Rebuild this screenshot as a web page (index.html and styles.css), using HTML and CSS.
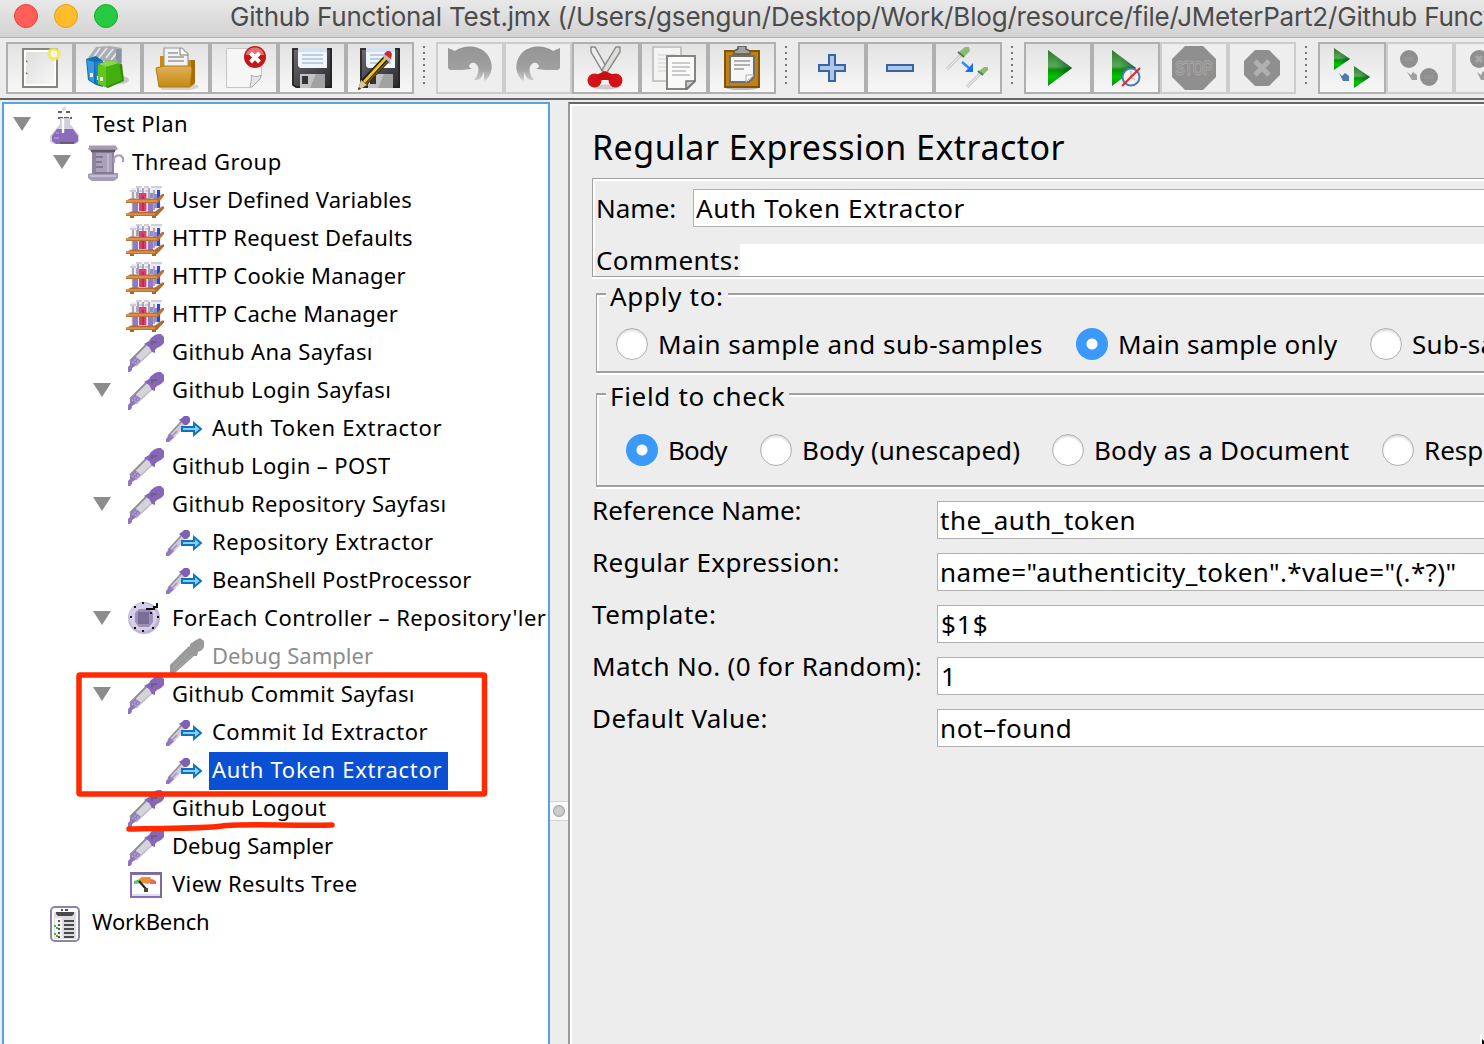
FILE: index.html
```html
<!DOCTYPE html>
<html lang="en">
<head>
<meta charset="utf-8">
<title>Github Functional Test.jmx</title>
<link rel="stylesheet" href="styles.css">
</head>
<body>
<svg class="defs" width="0" height="0" aria-hidden="true">
  <defs>
    <linearGradient id="gPlay" x1="0" y1="0" x2="0" y2="1"><stop offset="0" stop-color="#2a7a2a"/><stop offset=".45" stop-color="#5aa85a"/><stop offset=".55" stop-color="#0a900a"/><stop offset=".75" stop-color="#00c800"/><stop offset="1" stop-color="#0a8a0a"/></linearGradient>
    <linearGradient id="gShade" x1="0" y1="0" x2="1" y2="0"><stop offset=".3" stop-color="#064" stop-opacity="0"/><stop offset="1" stop-color="#043c04" stop-opacity=".7"/></linearGradient>
    <linearGradient id="gFolder" x1="0" y1="0" x2="0" y2="1"><stop offset="0" stop-color="#e0b05a"/><stop offset="1" stop-color="#c48a10"/></linearGradient>
    <linearGradient id="gDisk" x1="0" y1="0" x2="1" y2="1"><stop offset="0" stop-color="#6a6a70"/><stop offset="1" stop-color="#2a2a2e"/></linearGradient>
    <linearGradient id="gPage" x1="0" y1="0" x2="1" y2="1"><stop offset="0" stop-color="#dedede"/><stop offset="1" stop-color="#f6f6f6"/></linearGradient>
    <linearGradient id="gUndo" x1="0" y1="0" x2="0" y2="1"><stop offset="0" stop-color="#949494"/><stop offset=".65" stop-color="#a0a0a0"/><stop offset="1" stop-color="#cfcfcf"/></linearGradient>
    <symbol id="pipette" viewBox="0 0 38 38">
      <path d="M4 26L20 10L26 16L11 31L6 34L4 33Z" fill="#d6d3dc"/>
      <path d="M2 38V33L4 31V27L9 22L15 27L9 32L6 34V36L4 38Z" fill="#8f76c0"/>
      <path d="M6 29L11 24M9 30L13 26" stroke="#b9a8da" stroke-width="1.600" stroke-dasharray="2 1"/>
      <path d="M4 27L20 11" stroke="#918e98" stroke-width="1.800"/>
      <path d="M10 32L26 17" stroke="#bcb8c6" stroke-width="1.500"/>
      <path d="M18 10L23 7L25 4L29 1L32 0H35L38 3V9L35 12L31 14L29 16V19L26 18L23 13Z" fill="#8566b8"/>
      <path d="M25 7H31V9H27V11H25Z" fill="#6c6080"/>
    </symbol>
    <symbol id="pipette-off" viewBox="0 0 38 38">
      <path d="M4 34V27L22 9L24 8V6L30 2L34 0L38 3V9L36 12L32 14L31 18L28 18L10 34L6 36V38H4Z" fill="#999"/>
      <path d="M7 30L22 15M10 32L26 17" stroke="#a8a8a8" stroke-width="1.5" stroke-dasharray="2 1"/>
    </symbol>
    <symbol id="extractor" viewBox="0 0 38 38">
      <path d="M1 28L14 12L19 16L8 28L3 32Z" fill="#cfcbd8"/>
      <path d="M0 32V29L4 24L8 27L3 32Z" fill="#9077c0"/>
      <path d="M2 26L15 12" stroke="#918e9a" stroke-width="1.6"/>
      <path d="M5 27L11 21" stroke="#a78fd0" stroke-width="1.600"/>
      <path d="M13 10L16 8L18 6H22L24 8V12L21 15L18 15Z" fill="#8060b4"/>
      <path d="M16 17H28V13L35 19L28 25V21H16Z" fill="#8acdf6" stroke="#0a73bd" stroke-width="1.9"/>
    </symbol>
    <symbol id="rack" viewBox="0 0 19 19">
      <path d="M2.500 3H17.500V14H2.500Z" fill="#eeebf2"/>
      <path d="M2 4.500H5M5 2.500H8M6 4.500H8.500M9 2.500H11.500M9.500 4.500H12M12.500 2.500H15M15 2.500H18" stroke="#c4bfce" stroke-width=".8"/>
      <path d="M3.500 5V15M6 3V8M8.500 3V6M11.500 3V15M14 4V14M5.500 5V8" stroke="#a59fb4" stroke-width=".9"/>
      <path d="M3.500 10.500H6V15H3.500ZM11 10.500H13.500V15H11Z" fill="#9478c4"/>
      <path d="M12 5.500H13.500V8H12ZM14 6H15.500V13H14Z" fill="#8f8fd0"/>
      <path d="M15.500 4H17V13H15.500Z" fill="#2f49d0"/>
      <path d="M0 9.500L2 8.300H15.500L18 6H19V7L16 10.500H0Z" fill="#b87432"/><path d="M0 9H15.500V10H0Z" fill="#d8904a"/>
      <path d="M0 16L2.500 14.800H14.500L18 12.200H19V13.200L15.500 17H0Z" fill="#b06c2c"/><path d="M0 15.600H14.500V16.600H0Z" fill="#d8904a"/>
      <path d="M6.500 5.500H10.200V8.500H6.500ZM6.500 10.500H10.200V14.500H6.500Z" fill="#d8406e"/><path d="M8 7H9V8.500H8ZM8 10.500H9V14.500H8Z" fill="#b83058"/>
      <path d="M2 17H4V18H2ZM13 17H15V18H13Z" fill="#aa6420"/>
    </symbol>
    <symbol id="flask" viewBox="0 0 38 38">
      <path d="M16 2L20 0V4L16 6Z" fill="#dcdae4"/>
      <path d="M12 6H16M20 6H24M12 12H26" stroke="#606060" stroke-width="2" stroke-dasharray="5 1"/>
      <path d="M14 12H24V18L33 29V36L30 38H8L4 36V30L14 18Z" fill="#d2cede"/>
      <path d="M11 23H27L32 30V35L28 38H10L6 35V30Z" fill="#8a6cbc"/>
      <path d="M8 32H13M10 27H13" stroke="#a88cd2" stroke-width="2"/>
      <path d="M17 13V27" stroke="#fff" stroke-width="2.4"/>
      <path d="M14 36.8H28" stroke="#606066" stroke-width="2"/>
    </symbol>
    <symbol id="spool" viewBox="0 0 38 38">
      <path d="M4 2H30L32 5L28 8V29H32V34L28 37H6L2 34V30L6 29V8L2 5Z" fill="#a69cb8"/>
      <path d="M6 8H28V30H6Z" fill="#8e849f"/><path d="M10 9H26V30H10Z" fill="#aaa0bc"/>
      <path d="M22 10V30" stroke="#c0b8ce" stroke-width="2"/>
      <path d="M10 13H17M10 18H16M10 23H17M9 29H27" stroke="#776d89" stroke-width="1.5"/>
      <path d="M3 3H30" stroke="#a69ab6" stroke-width="3"/><path d="M5 7H29" stroke="#5e5a64" stroke-width="2.500"/>
      <path d="M4 32H30" stroke="#c6bed4" stroke-width="2"/>
      <path d="M28 19V14L31 11.500H35L37 14V18" fill="none" stroke="#a79fb7" stroke-width="2.2"/>
    </symbol>
    <symbol id="loop" viewBox="0 0 38 38">
      <circle cx="18" cy="18" r="16" fill="#beb4d2"/><circle cx="17" cy="17" r="14" fill="#d6cde6"/>
      <path d="M13 9H23L27 13V22L23 27H13L9 22V13Z" fill="#9c90b6"/><path d="M12 12H23V24H12Z" fill="#7b6e97"/>
      <path d="M20 9H28V7H31V4H32" fill="none" stroke="#111" stroke-width="2"/>
      <path d="M16 2H18V4H16ZM8 6H10V8H8ZM4 16H6V18H4ZM8 27H10V29H8ZM16 30H18V32H16ZM26 27H28V29H26ZM31 16H33V18H31ZM24 12H26V14H24Z" fill="#111"/>
    </symbol>
    <symbol id="results" viewBox="0 0 38 38">
      <path d="M4 6H36V32H4Z" fill="#8a6cbc"/><path d="M4 6H36V8H4ZM34 6H36V32H34Z" fill="#7a6e90"/><path d="M6 9H34V30H6Z" fill="#fff"/>
      <path d="M6 28H34V30H6Z" fill="#e0dee6"/>
      <path d="M8 18V15L14 13L16 17Z" fill="#58c470"/><path d="M13 13L16 11H24L26 14L22 18L16 17Z" fill="#e69038"/><path d="M23 16L26 13L30 15V18H24Z" fill="#ee6860"/>
      <path d="M13 15L20 23" stroke="#222" stroke-width="2"/><path d="M18 22H22V26H18Z" fill="#444"/>
    </symbol>
    <symbol id="bench" viewBox="0 0 38 38">
      <rect x="5" y="3" width="28" height="34" rx="4" fill="#fff" stroke="#8d86a0" stroke-width="2"/><path d="M8 8H30V35H8Z" fill="#dddce4"/>
      <path d="M10 8H28V10L26 12H12L10 10Z" fill="#4a4a4a"/><path d="M15 6H17M19 6H22" stroke="#555" stroke-width="2"/>
      <path d="M9 14H16V34H9Z" fill="#f5f5f7"/>
      <path d="M18 17H28M18 21H28M18 25H28M18 29H28M18 33H28" stroke="#4a4a4a" stroke-width="1.9"/>
      <path d="M12 17H14M12 21H14M12 25H14M12 29H14M12 33H14" stroke="#555" stroke-width="2"/><path d="M8 22H10M10 24H12M8 30H10M10 32H12" stroke="#46b428" stroke-width="2"/>
    </symbol>
    <symbol id="disk" viewBox="0 0 44 44">
      <path d="M2 2H42V42H6L2 38Z" fill="url(#gDisk)"/><path d="M3 39V3H41V41H6Z" fill="none" stroke="#222" stroke-width="1.6"/>
      <path d="M8 2H37V22H10L8 20Z" fill="#f0f5fa"/><path d="M8 2H37V6H8Z" fill="#d2e2f0"/><path d="M12 9H33M12 13H33M12 17H33" stroke="#a8c0da" stroke-width="1.6"/>
      <path d="M10 28H35V42H10Z" fill="#c2c2c2"/><path d="M26 28H35V42H20Z" fill="#a2a2a2"/><path d="M12 30H18V38H12Z" fill="#333"/>
    </symbol>
    <symbol id="undo" viewBox="0 0 44 44">
      <path d="M0 2L7 5C16 -2 32 -1 39 8C46 17 45 28 37 35C35 32 37 29 35 26C35 31 32 35 26 34C30 30 32 23 29 19C26 15 21 17 21 21L24 23L14 24H2L0 22Z" fill="url(#gUndo)"/>
    </symbol>
  </defs>
</svg>

<div class="window">
  <header class="titlebar">
    <div class="lights"><span class="light red"></span><span class="light yellow"></span><span class="light green"></span></div>
    <div class="title">Github Functional Test.jmx (/Users/gsengun/Desktop/Work/Blog/resource/file/JMeterPart2/Github Functional Test.jmx)</div>
  </header>

  <div class="toolbar">
    <div class="tools">
      <button class="tool"><svg viewBox="0 0 44 44"><path d="M5 3H39V41H5Z" fill="#fff" stroke="#85877f" stroke-width="2"/><path d="M8 6H36V38H8Z" fill="url(#gPage)"/><path d="M6 17H9M6 29H9" stroke="#fff" stroke-width="4"/><path d="M8 15.500H9.500M8 27.500H9.500" stroke="#666" stroke-width="1.400"/><circle cx="36" cy="8" r="7" fill="#f0e67a" opacity=".7"/><circle cx="36" cy="8" r="4.500" fill="#fffbd6" stroke="#f2e464" stroke-width="2"/></svg></button>
      <button class="tool"><svg viewBox="0 0 44 44"><ellipse cx="34" cy="34" rx="9" ry="4" fill="#aaa" opacity=".6"/><path d="M2 12L10 1L24 0L36 2V17L20 16L14 14L3 15Z" fill="#a9afb4"/><path d="M7 12L14 2M12 13L21 2M20 12L27 3M25 14L33 4" stroke="#e6e8ea" stroke-width="1.6"/><path d="M30 3H35V18L30 14Z" fill="#8296a4"/><path d="M0 13L10 10L17 15V41L10 39L2 34Z" fill="#1470b4"/><path d="M1 14L8 16V37L3 33Z" fill="#3a9ade"/><path d="M9 16L16 15V40L10 37Z" fill="#1a84cc"/><path d="M4 27H7V31H4ZM11 30H14V34H11Z" fill="#e8f4fc"/><path d="M12 18L25 14L36 18L38 35L22 42L12 38Z" fill="#348c06"/><path d="M12 19L20 20V41L12 38Z" fill="#62c81e"/><path d="M12 18L25 14L35 18L20 21Z" fill="#8ad850"/><path d="M20 21L33 17L36 34L20 41Z" fill="#44b010"/><path d="M14 31H17V35H14Z" fill="#f2ffe8"/></svg></button>
      <button class="tool"><svg viewBox="0 0 44 44"><path d="M5 39H44V42L36 44H8Z" fill="#bbb" opacity=".6"/><path d="M6 10H12L14 14H41V38L36 41H6Z" fill="#c98a0e"/><path d="M10 2H28L34 8V22H10Z" fill="#f3f3f3" stroke="#999" stroke-width="1.2"/><path d="M26 2V9H34" fill="#fff" stroke="#777"/><path d="M14 7H24M14 11H30M14 15H30" stroke="#999" stroke-width="1.5"/><path d="M37 14H41V36L37 40Z" fill="#a86c04"/><path d="M2 22L10 20H37L38 23L36 41H5Z" fill="url(#gFolder)" stroke="#b37a0c"/></svg></button>
      <button class="tool"><svg viewBox="0 0 44 44"><path d="M4.500 2.500H39.500V30L28 41.500H4.500Z" fill="#f6f6f6" stroke="#c6c6c6"/><path d="M28 41C29 36 30 31 29 29C34 32 37 30 39 29L38 33L30 41Z" fill="#e6e6e6" stroke="#aaa"/><circle cx="33" cy="11" r="11" fill="#c41818"/><path d="M24 9C25 -1 41 -1 42 9Z" fill="#e07474"/><path d="M28.500 7L37.500 16M37.500 7L28.500 16" stroke="#fff" stroke-width="4"/></svg></button>
      <button class="tool"><svg viewBox="0 0 44 44"><use href="#disk"/></svg></button>
      <button class="tool"><svg viewBox="0 0 44 44"><use href="#disk"/><path d="M0 44L3 34L26 10L32 15L9 39Z" fill="#222"/><path d="M5 35L27 11L29 13L7 37Z" fill="#f4c61a"/><path d="M8 38L31 14" stroke="#7c5a08" stroke-width="1.5"/><path d="M0 44L3 34L9 39Z" fill="#e0c69a"/><path d="M25 11L28 8L34 13L31 16Z" fill="#bcbcbc"/><path d="M26 8L29 5H32L34 8L33 13Z" fill="#d42430"/><path d="M0 44L1 41L3 43Z" fill="#333"/></svg></button>
    </div>
    <span class="grip"></span>
    <div class="tools">
      <button class="tool off"><svg viewBox="0 0 44 44"><use href="#undo"/></svg></button>
      <button class="tool off"><svg viewBox="0 0 44 44" class="flip"><use href="#undo"/></svg></button>
      <button class="tool"><svg viewBox="0 0 44 44"><ellipse cx="22" cy="41" rx="12" ry="2.500" fill="#ccc"/><path d="M7 1H11L24 24L20 28L7 6Z" fill="#ededed" stroke="#888a85" stroke-width="1.4"/><path d="M36 1H32L18 24L22 28L36 6Z" fill="#dcdcdc" stroke="#888a85" stroke-width="1.4"/><ellipse cx="10.500" cy="34.500" rx="3.500" ry="3.500" fill="#f6dada" stroke="#d41414" stroke-width="7"/><ellipse cx="31.500" cy="34.500" rx="3.500" ry="3.500" fill="#f6dada" stroke="#d41414" stroke-width="7"/><path d="M12 29L21 25L30 29L26 34H16Z" fill="#c81010"/></svg></button>
      <button class="tool"><svg viewBox="0 0 44 44"><path d="M1 1H29V35H1Z" fill="#f4f4f4" stroke="#bbb" stroke-width="1.6"/><path d="M6 9H24M6 13H24M6 17H20M6 21H20M6 25H20" stroke="#ddd" stroke-width="1.6"/><path d="M15 10H43V35L35 43H15Z" fill="#fafafa" stroke="#85877f" stroke-width="2"/><path d="M20 17H38M20 21H38M20 25H34M20 29H38" stroke="#bdbdbd" stroke-width="1.6"/><path d="M34 43V35H43Z" fill="#ccc" stroke="#777" stroke-width="1.5"/></svg></button>
      <button class="tool"><svg viewBox="0 0 44 44"><ellipse cx="22" cy="42" rx="16" ry="2" fill="#bbb"/><path d="M5 5H39V41H5Z" fill="#bd811c" stroke="#845406" stroke-width="2"/><path d="M10 10H34V31L29 36H10Z" fill="#f6f6f6" stroke="#73706a" stroke-width="2"/><path d="M14 15H30M14 19H30M14 23H24" stroke="#999" stroke-width="1.7"/><path d="M26 36V29H34Z" fill="#fff" stroke="#aaa"/><path d="M14 8V5L18 3V0H26V3L30 5V8Z" fill="#a2a29c" stroke="#5a5a56" stroke-width="1.4"/></svg></button>
    </div>
    <span class="grip"></span>
    <div class="tools">
      <button class="tool"><svg viewBox="0 0 44 44"><path d="M19 9H25V19H35V25H25V35H19V25H9V19H19Z" fill="#aec6e4" stroke="#3465a4" stroke-width="2"/></svg></button>
      <button class="tool"><svg viewBox="0 0 44 44"><path d="M9 19H35V25H9Z" fill="#aec6e4" stroke="#3465a4" stroke-width="2"/></svg></button>
      <button class="tool"><svg viewBox="0 0 44 44"><path d="M1 23L15 9M21 41L34 28" stroke="#bcbcbc" stroke-width="3"/><path d="M1 23L15 9M21 41L34 28" stroke="#ececec" stroke-width="1.400"/><path d="M13 6L19 1L23 1L24 5L18 11Z" fill="#8cbc70"/><path d="M33 25L38 21H42V24L37 29Z" fill="#8cbc70"/><path d="M12 6L18 11M32 25L37 29" stroke="#52804a" stroke-width="2"/><path d="M16 16L23 22" stroke="#3a84f0" stroke-width="2.500"/><path d="M27 17V26H19Z" fill="#1a6ef2"/></svg></button>
    </div>
    <span class="grip"></span>
    <div class="tools">
      <button class="tool"><svg viewBox="0 0 44 44"><path d="M12 4L36 22L12 40Z" fill="url(#gPlay)"/><path d="M12 4L36 22L12 40Z" fill="url(#gShade)"/></svg></button>
      <button class="tool"><svg viewBox="0 0 44 44"><path d="M8 4L32 22L8 40Z" fill="url(#gPlay)"/><path d="M8 4L32 22L8 40Z" fill="url(#gShade)"/><circle cx="27" cy="31" r="8.500" fill="#f2f2f2" stroke="#4a7ab8" stroke-width="2"/><path d="M27 25V31L31 34" stroke="#ccc" stroke-width="2" fill="none"/><path d="M18 40L36 22" stroke="#e02a2a" stroke-width="2.200"/></svg></button>
      <button class="tool off"><svg viewBox="0 0 44 44"><path d="M13 0H31L44 13V31L31 44H13L0 31V13Z" fill="#8f8f8f"/><text x="22" y="29" class="stop" textLength="37" lengthAdjust="spacingAndGlyphs">STOP</text></svg></button>
      <button class="tool off"><svg viewBox="0 0 44 44"><path d="M15 4H29L40 15V29L29 40H15L4 29V15Z" fill="#8f8f8f"/><path d="M15 15L29 29M29 15L15 29" stroke="#b0b0b0" stroke-width="5"/></svg></button>
    </div>
    <span class="grip"></span>
    <div class="tools">
      <button class="tool"><svg viewBox="0 0 44 44"><path d="M4 2L20 13L4 24Z" fill="url(#gPlay)"/><path d="M4 2L20 13L4 24Z" fill="url(#gShade)"/><path d="M24 20L40 31L24 42Z" fill="url(#gPlay)"/><path d="M24 20L40 31L24 42Z" fill="url(#gShade)"/><path d="M9 27L12 30L15 27L19 30V35H13Z" fill="#4c78b4"/></svg></button>
      <button class="tool off"><svg viewBox="0 0 44 44"><circle cx="11" cy="13" r="9" fill="#8f8f8f"/><circle cx="31" cy="31" r="9" fill="#8f8f8f"/><path d="M6 13H16M26 31H36" stroke="#969696" stroke-width="4"/><path d="M9 26L13 29L15 26L19 29V34H14Z" fill="#a0a0a0"/></svg></button>
      <button class="tool off"><svg viewBox="0 0 44 44"><circle cx="13" cy="13" r="9" fill="#8f8f8f"/><circle cx="33" cy="31" r="9" fill="#8f8f8f"/><path d="M10 10L16 16M16 10L10 16" stroke="#a8a8a8" stroke-width="3"/><path d="M11 26L15 29L17 25L21 28V34H15Z" fill="#a0a0a0"/></svg></button>
    </div>
  </div>

  <main class="split">
    <nav class="tree">
      <div class="row l0"><i class="open"></i><svg class="ico"><use href="#flask"/></svg><span class="t4">Test Plan</span></div>
      <div class="row l1"><i class="open"></i><svg class="ico"><use href="#spool"/></svg><span class="t5">Thread Group</span></div>
      <div class="row l2"><i></i><svg class="ico"><use href="#rack"/></svg><span class="t2">User Defined Variables</span></div>
      <div class="row l2"><i></i><svg class="ico"><use href="#rack"/></svg><span class="t2">HTTP Request Defaults</span></div>
      <div class="row l2"><i></i><svg class="ico"><use href="#rack"/></svg><span class="t2">HTTP Cookie Manager</span></div>
      <div class="row l2"><i></i><svg class="ico"><use href="#rack"/></svg><span class="t2">HTTP Cache Manager</span></div>
      <div class="row l2"><i></i><svg class="ico"><use href="#pipette"/></svg><span class="t4">Github Ana Sayfası</span></div>
      <div class="row l2"><i class="open"></i><svg class="ico"><use href="#pipette"/></svg><span class="t4">Github Login Sayfası</span></div>
      <div class="row l3"><i></i><svg class="ico"><use href="#extractor"/></svg><span class="t7">Auth Token Extractor</span></div>
      <div class="row l2"><i></i><svg class="ico"><use href="#pipette"/></svg><span class="t4">Github Login – POST</span></div>
      <div class="row l2"><i class="open"></i><svg class="ico"><use href="#pipette"/></svg><span class="t4">Github Repository Sayfası</span></div>
      <div class="row l3"><i></i><svg class="ico"><use href="#extractor"/></svg><span class="t6">Repository Extractor</span></div>
      <div class="row l3"><i></i><svg class="ico"><use href="#extractor"/></svg><span class="t2">BeanShell PostProcessor</span></div>
      <div class="row l2"><i class="open"></i><svg class="ico"><use href="#loop"/></svg><span class="t47">ForEach Controller – Repository'ler</span></div>
      <div class="row l3 disabled"><i></i><svg class="ico"><use href="#pipette-off"/></svg><span class="t1">Debug Sampler</span></div>
      <div class="row l2"><i class="open"></i><svg class="ico"><use href="#pipette"/></svg><span class="t35">Github Commit Sayfası</span></div>
      <div class="row l3"><i></i><svg class="ico"><use href="#extractor"/></svg><span class="t4">Commit Id Extractor</span></div>
      <div class="row l3 selected"><i></i><svg class="ico"><use href="#extractor"/></svg><span class="t7">Auth Token Extractor</span></div>
      <div class="row l2"><i></i><svg class="ico"><use href="#pipette"/></svg><span class="t4">Github Logout</span></div>
      <div class="row l2"><i></i><svg class="ico"><use href="#pipette"/></svg><span class="t1">Debug Sampler</span></div>
      <div class="row l2"><i></i><svg class="ico"><use href="#results"/></svg><span class="t4">View Results Tree</span></div>
      <div class="row l0"><i></i><svg class="ico"><use href="#bench"/></svg><span class="tn">WorkBench</span></div>
    </nav>
    <div class="divider"><span class="knob"></span></div>
    <section class="panel">
      <h1 class="t47">Regular Expression Extractor</h1>
      <div class="namebox">
        <div class="line name"><label>Name:</label><div class="field t65">Auth Token Extractor</div></div>
        <div class="line comments"><label class="t4">Comments:</label><div class="blank"></div></div>
      </div>
      <div class="group apply">
        <div class="legend t7">Apply to:</div>
        <div class="radios">
          <label><b class="radio"></b><span class="t53">Main sample and sub-samples</span></label>
          <label><b class="radio on"></b><span class="t3">Main sample only</span></label>
          <label><b class="radio"></b><span class="t3">Sub-samples only</span></label>
        </div>
      </div>
      <div class="group check">
        <div class="legend t65">Field to check</div>
        <div class="radios">
          <label><b class="radio on"></b><span class="tm">Body</span></label>
          <label><b class="radio"></b><span class="t1">Body (unescaped)</span></label>
          <label><b class="radio"></b><span class="t2">Body as a Document</span></label>
          <label><b class="radio"></b><span>Response Headers</span></label>
        </div>
      </div>
      <div class="form">
        <div class="frow"><label>Reference Name:</label><div class="field t5">the_auth_token</div></div>
        <div class="frow"><label class="t35">Regular Expression:</label><div class="field t38">name="authenticity_token".*value="(.*?)"</div></div>
        <div class="frow"><label class="t5">Template:</label><div class="field wide">$1$</div></div>
        <div class="frow"><label class="t35">Match No. (0 for Random):</label><div class="field wide">1</div></div>
        <div class="frow"><label class="t4">Default Value:</label><div class="field t6">not–found</div></div>
      </div>
    </section>
  </main>
  <svg class="marks" viewBox="0 0 1484 1044"><rect x="79" y="675" width="405.500" height="119" rx="1" /><path d="M129 829C160 828 200 829 222 826C240 823 290 826 332 825"/></svg>
  <svg class="cursor" viewBox="0 0 5 12"><path d="M1 0L5 4V12H1Z" fill="#fff"/><path d="M3 5L5 7V12H3Z" fill="#000"/></svg>
</div>
</body>
</html>
```
FILE: styles.css
```css
* { box-sizing: border-box; }
body { margin: 0; background: #ededed; color: #000; font-family: "Noto Sans", "Open Sans", sans-serif; overflow: hidden; }
.defs { position: absolute; }
.window { position: relative; width: 1484px; height: 1044px; overflow: hidden; display: flex; flex-direction: column; }

/* tracking steps */
.tm { letter-spacing: -0.8px; }
.tn { letter-spacing: -0.12px; }
.t1 { letter-spacing: 0.05px; }
.t2 { letter-spacing: 0.22px; }
.t3 { letter-spacing: 0.28px; }
.t35 { letter-spacing: 0.35px; }
.t38 { letter-spacing: 0.38px; }
.t4 { letter-spacing: 0.41px; }
.t47 { letter-spacing: 0.47px; }
.t5 { letter-spacing: 0.51px; }
.t53 { letter-spacing: 0.53px; }
.t6 { letter-spacing: 0.58px; }
.t65 { letter-spacing: 0.68px; }
.t7 { letter-spacing: 0.71px; }

.titlebar { height: 38px; flex: none; display: flex; background: linear-gradient(#e9e9e9, #d2d2d2); border-bottom: 1px solid #b1b1b1; }
.lights { display: flex; gap: 16px; padding: 4px 0 0 14px; width: 230px; flex: none; }
.light { width: 24px; height: 24px; border-radius: 50%; border: 1px solid; }
.red { background: #ff5f57; border-color: #e2463f; }
.yellow { background: #ffbd2e; border-color: #e1a116; }
.green { background: #28ca42; border-color: #12ac28; }
.title { font: 26px/34px Inter, sans-serif; color: #4b4b4b; letter-spacing: -0.18px; white-space: nowrap; }

.toolbar { height: 62px; flex: none; display: flex; padding: 4px 0 0 6px; border-bottom: 2px solid #666; }
.tools { display: flex; flex: none; }
.tool { width: 68px; height: 52px; padding: 2px 10px; border: 2px solid #b0b0b0; border-radius: 0; background: linear-gradient(#e3e3e3, #f7f7f7); display: block; }
.tool.off { border-color: #cdcdcd; background: #eee; }
.tool svg { display: block; width: 44px; height: 44px; }
.flip { transform: scaleX(-1); }
.stop { font: bold 20px "Liberation Sans", sans-serif; text-anchor: middle; fill: #8f8f8f; stroke: #a6a6a6; stroke-width: 1.2px; }
.grip { flex: none; width: 22px; height: 38px; margin-top: 4px; background: repeating-linear-gradient(#777 0 2px, transparent 2px 6px) 9px 0 / 2px 38px no-repeat; }

.split { flex: 1; display: flex; padding: 2px 0 0 2px; min-height: 0; }
.tree { width: 548px; flex: none; border: 2px solid #55a3e5; border-bottom: 0; background: #fff; padding-top: 2px; overflow: hidden; }
.row { display: flex; height: 38px; font-size: 22px; line-height: 35px; white-space: nowrap; }
.row i { flex: none; width: 18px; height: 14px; margin: 11px 15px 0 9px; }
.row i.open { background: #8c8c8c; clip-path: polygon(0 0, 100% 0, 50% 100%); }
.ico { flex: none; width: 38px; height: 38px; margin-right: 5px; }
.row span { padding: 0 6px 0 3px; height: 38px; }
.l1 { padding-left: 40px; }
.l2 { padding-left: 80px; }
.l3 { padding-left: 120px; }
.disabled { color: #8c8c8c; }
.selected span { background: #0a50d2; color: #fff; }
.divider { width: 18px; flex: none; padding-top: 699px; }
.knob { display: block; height: 20px; border: solid #d4d4d4; border-width: 1px 0; background: radial-gradient(circle at 9px 9px, #ccc 0 4px, #aaa 5.5px, transparent 6.5px) #fafafa; }

.panel { flex: 1; min-width: 0; border: solid; border-width: 2px 0 0 2px; border-color: #666 #999 #999; box-shadow: inset 2px 2px #fff; padding-left: 22px; font-size: 26px; white-space: nowrap; }
h1 { margin: 0; height: 74px; padding-top: 19px; font-size: 34px; font-weight: 400; line-height: 49px; }
.namebox { height: 99px; width: 1000px; border: 1px solid #a0a0a0; box-shadow: inset 2px 2px #fff, 0 2px #fff; }
.line { display: flex; line-height: 38px; padding-left: 3px; }
.name { padding-top: 10px; }
.name label { width: 97px; }
.field { border: 1px solid #b0b0b0; background: #fff; height: 38px; line-height: 36px; padding-left: 2px; flex: 1; }
.field.wide { letter-spacing: 1px; padding-left: 3px; }
.comments { padding-top: 17px; line-height: 32px; }
.comments label { width: 144px; }
.blank { background: #fff; height: 32px; flex: 1; }
.group { position: relative; margin-left: 4px; width: 1000px; border: solid #a0a0a0; border-width: 2px 1px; box-shadow: inset 2px 2px #fff, 0 2px #fff; }
.apply { height: 80px; margin-top: 16px; }
.check { height: 94px; margin-top: 20px; }
.legend { position: absolute; left: 9px; top: -16px; background: #ededed; line-height: 34px; height: 34px; padding: 0 4px; }
.radios { display: flex; padding: 33px 0 0 19px; }
.check .radios { padding: 39px 0 0 29px; }
.radios label { display: flex; flex: none; line-height: 32px; height: 32px; gap: 10px; }
.apply label:nth-child(1) { width: 460px; }
.apply label:nth-child(2) { width: 294px; }
.check label:nth-child(1) { width: 134px; }
.check label:nth-child(2) { width: 292px; }
.check label:nth-child(3) { width: 330px; }
.radio { width: 32px; height: 32px; border-radius: 50%; background: #fff; border: 1.5px solid #b0b0b0; box-shadow: inset 0 2px 2px #ddd; }
.radio.on { border: 0; background: radial-gradient(circle, #fff 5px, #3b99fc 6px); box-shadow: none; }
.form { padding-top: 14px; }
.frow { display: flex; height: 52px; }
.frow label { width: 345px; flex: none; line-height: 18px; }
.frow .field { width: 600px; flex: none; }

.marks { position: absolute; left: 0; top: 0; width: 1484px; height: 1044px; fill: none; stroke: #ff2a00; stroke-width: 5.5; stroke-linecap: round; pointer-events: none; }
.cursor { position: absolute; left: 1479px; top: 1034px; width: 5px; height: 12px; }
```
